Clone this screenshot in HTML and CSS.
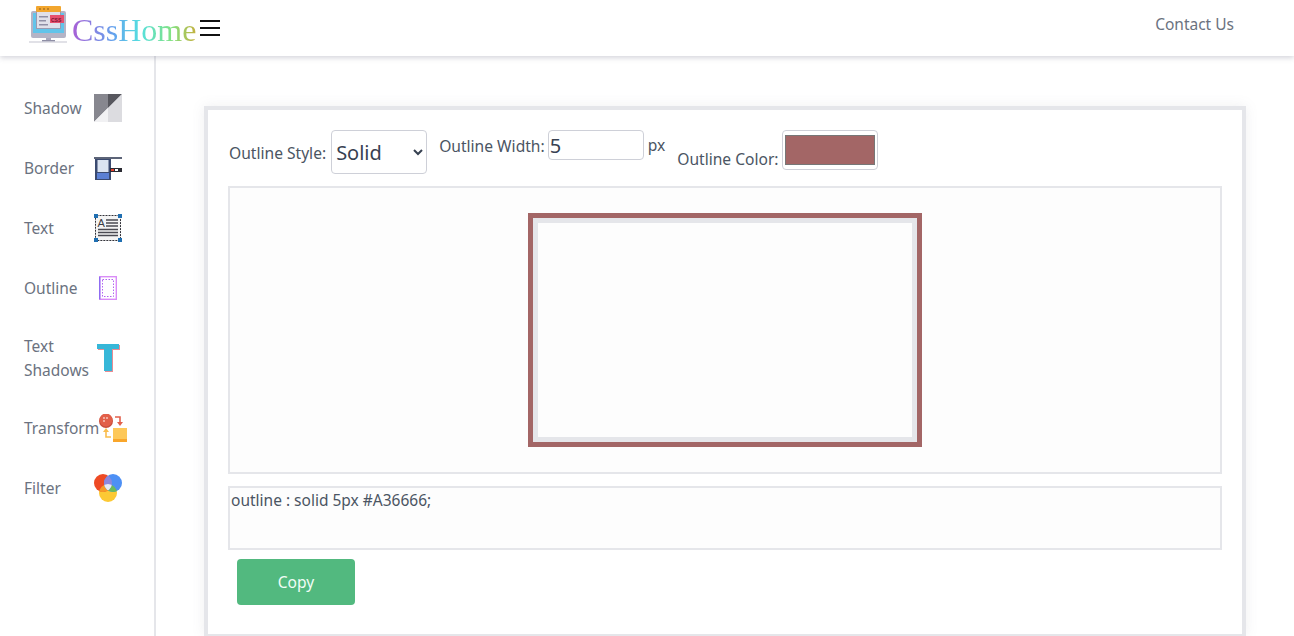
FILE: index.html
```html
<!DOCTYPE html>
<html lang="en">
<head>
	<meta charset="UTF-8">
	<meta name="viewport" content="width=device-width, initial-scale=1.0">
	<title>CssHome</title>

	<link rel="stylesheet" href="styles.css">
</head>
<body>

	<header class="navbar">
		<a class="brand" href="#">
			<svg class="logo" width="40" height="38" viewBox="0 0 40 38">
				<rect x="3" y="6" width="35" height="27" rx="2" fill="#b4b4c6"/>
				<rect x="5" y="8" width="31" height="20" fill="#62c4ea"/>
				<rect x="8.5" y="3.5" width="24" height="20" fill="#e0e0e9" stroke="#9a9ab0"/>
				<rect x="8" y="1" width="25" height="6" rx="1" fill="#f2a62e"/>
				<path d="M11 4h2M15 4h2M19 4h2" stroke="#8a5a1c"/>
				<rect x="11" y="11" width="9" height="1.5" fill="#8f8fa6"/>
				<rect x="11" y="15" width="7" height="1.5" fill="#8f8fa6"/>
				<rect x="11" y="19" width="9" height="1.5" fill="#8f8fa6"/>
				<rect x="22" y="10" width="14" height="8" fill="#e6506e"/>
				<text x="23" y="16.5" class="logo-css">CSS</text>
				<rect x="18" y="33" width="5" height="2" fill="#a9a9bd"/>
				<rect x="14" y="35" width="13" height="1.5" fill="#8f8fa6"/>
				<rect x="1" y="36.5" width="38" height="1" fill="#c4c4d0"/>
			</svg>
			<span class="brand-name">CssHome</span>
		</a>
		<button class="burger" aria-label="menu"><i></i><i></i><i></i></button>
		<a class="contact" href="#">Contact Us</a>
	</header>

	<div class="page">
		<aside class="sidebar">
			<a class="side-item" href="#">
				<span class="side-label">Shadow</span>
				<svg width="28" height="28" viewBox="0 0 28 28">
					<polygon points="0,0 28,0 0,28" fill="#87878f"/>
					<polygon points="14,0 28,0 14,14" fill="#57575e"/>
					<polygon points="28,0 28,28 0,28" fill="#dcdce0"/>
					<polygon points="14,14 14,28 0,28" fill="#f1f1f3"/>
				</svg>
			</a>
			<a class="side-item" href="#">
				<span class="side-label">Border</span>
				<svg width="28" height="28" viewBox="0 0 28 28">
					<rect x="1" y="4" width="16" height="22" fill="#3a4a70"/>
					<rect x="0" y="3" width="28" height="2" fill="#5c6478"/>
					<rect x="3.5" y="6" width="11" height="12" fill="#dbe4f1"/>
					<rect x="3" y="19" width="12" height="6" fill="#5b80d4"/>
					<rect x="16" y="14" width="12" height="4" fill="#2b2b33"/>
					<rect x="17" y="15" width="3" height="2" fill="#e2402c"/>
					<rect x="21" y="15" width="3" height="2" fill="#fff"/>
				</svg>
			</a>
			<a class="side-item" href="#">
				<span class="side-label">Text</span>
				<svg width="28" height="28" viewBox="0 0 28 28">
					<rect x="1.5" y="1.5" width="25" height="25" rx="1" fill="#f4f4f4" stroke="#33333a" stroke-dasharray="2 1"/>
					<text x="3.5" y="13" class="icon-a">A</text>
					<path d="M12 6h12M12 9h12M12 12h12M4 15.500h20M4 18.500h20M4 21.500h20" stroke="#4a4a52" stroke-width="1.4"/>
					<rect x="0" y="0" width="4" height="4" fill="#1f6fb2"/>
					<rect x="24" y="0" width="4" height="4" fill="#1f6fb2"/>
					<rect x="0" y="24" width="4" height="4" fill="#1f6fb2"/>
					<rect x="24" y="24" width="4" height="4" fill="#1f6fb2"/>
				</svg>
			</a>
			<a class="side-item" href="#">
				<span class="side-label">Outline</span>
				<svg width="28" height="28" viewBox="0 0 28 28">
					<rect x="5.7" y="2.7" width="16.6" height="22.6" fill="#fff" stroke="#d98cf7" stroke-width="1.4"/>
					<path d="M5.700 2.700v22.600" stroke="#8f6cf2" stroke-width="1.4"/>
					<rect x="8.5" y="5.5" width="11" height="17" fill="none" stroke="#b164f0" stroke-dasharray="1.5 1.5"/>
				</svg>
			</a>
			<a class="side-item" href="#">
				<span class="side-label">Text Shadows</span>
				<svg width="28" height="30" viewBox="0 0 28 30">
					<path d="M4 2h22v5h-7v22h-8v-22h-7z" fill="#e98b93"/>
					<path d="M3 1h22v5h-7v22h-8v-22h-7z" fill="#36b7d8"/>
				</svg>
			</a>
			<a class="side-item" href="#">
				<span class="side-label">Transform</span>
				<svg width="28" height="28" viewBox="0 0 28 28">
					<circle cx="7" cy="7" r="7" fill="#c94f3d"/>
					<circle cx="7" cy="6" r="6.400" fill="#e25f49"/>
					<circle cx="5" cy="4" r="1" fill="#f5c4ba"/>
					<circle cx="8" cy="4" r="1" fill="#f5c4ba"/>
					<circle cx="5" cy="7" r="1" fill="#f5c4ba"/>
					<path d="M16 3h5v6" fill="none" stroke="#e2604c" stroke-width="1.6"/>
					<path d="M18 8h6l-3 4z" fill="#e2604c"/>
					<rect x="14" y="14" width="14" height="14" fill="#fdc859"/>
					<rect x="14" y="25" width="14" height="3" fill="#f9a62b"/>
					<path d="M12 23h-5v-6" fill="none" stroke="#f9bd4e" stroke-width="1.6"/>
					<path d="M4 18h6l-3-4z" fill="#f9bd4e"/>
				</svg>
			</a>
			<a class="side-item" href="#">
				<span class="side-label">Filter</span>
				<svg width="28" height="28" viewBox="0 0 28 28">
					<defs>
						<clipPath id="clip-red"><circle cx="9" cy="9" r="9"/></clipPath>
						<clipPath id="clip-blue"><circle cx="19" cy="9" r="9"/></clipPath>
						<clipPath id="clip-yellow"><circle cx="14" cy="19" r="9"/></clipPath>
					</defs>
					<circle cx="14" cy="19" r="9" fill="#fcc934"/>
					<circle cx="9" cy="9" r="9" fill="#ee4a24"/>
					<circle cx="19" cy="9" r="9" fill="#4d90f5"/>
					<circle cx="9" cy="9" r="9" fill="#f59a28" clip-path="url(#clip-yellow)"/>
					<circle cx="19" cy="9" r="9" fill="#6cbb5c" clip-path="url(#clip-yellow)"/>
					<circle cx="9" cy="9" r="9" fill="#8d87dd" clip-path="url(#clip-blue)"/>
					<g clip-path="url(#clip-yellow)">
						<circle cx="9" cy="9" r="9" fill="#e6eaf4" clip-path="url(#clip-blue)"/>
					</g>
				</svg>
			</a>
		</aside>

		<main class="content">
			<section class="card">
				<div class="controls">
					<div class="control control-style">
						<label for="style">Outline Style:</label>
						<select id="style" class="style-select">
							<option>Solid</option>
							<option>Dashed</option>
							<option>Dotted</option>
						</select>
					</div>
					<div class="control control-width">
						<label for="width">Outline Width:</label>
						<input id="width" class="width-input" type="text" value="5">
						<span class="unit">px</span>
					</div>
					<div class="control control-color">
						<label for="color">Outline Color:</label>
						<input id="color" class="color-input" type="color" value="#a36666">
					</div>
				</div>

				<div class="preview">
					<div class="preview-box"></div>
				</div>

				<textarea class="code" readonly>outline : solid 5px #A36666;</textarea>

				<button class="copy">Copy</button>
			</section>
		</main>
	</div>

</body>
</html>
```

FILE: styles.css
```css
* {
	margin: 0;
	padding: 0;
	box-sizing: border-box;
}

html, body {
	height: 100%;
	overflow: hidden;
}

body {
	display: flex;
	flex-direction: column;
	font-family: "Noto Sans", sans-serif;
	font-size: 15.5px;
	line-height: 24px;
	color: #4b5563;
	background-color: #fff;
}

a {
	color: inherit;
	text-decoration: none;
}

.navbar {
	position: relative;
	z-index: 2;
	display: flex;
	align-items: center;
	flex: none;
	height: 56px;
	padding: 0 60px 0 28px;
	background-color: #fff;
	box-shadow: 0 2px 5px rgba(120, 120, 140, .3);
}

.brand {
	display: flex;
	align-items: center;
}

.logo {
	margin: -8px 4px 0 0;
}

.logo-css {
	font-family: "Liberation Sans", sans-serif;
	font-size: 5px;
	font-weight: bold;
	fill: #7a1230;
}

.icon-a {
	font-family: "Liberation Sans", sans-serif;
	font-size: 11px;
	fill: #3c3c44;
}

.brand-name {
	font-family: "Liberation Serif", serif;
	font-size: 32px;
	line-height: 40px;
	margin-top: 4px;
	background: linear-gradient(90deg, #a95fd6, #62a6ee 35%, #55e0df 55%, #82e283 80%, #c4b13f);
	-webkit-background-clip: text;
	background-clip: text;
	color: transparent;
}

.burger {
	display: flex;
	flex-direction: column;
	gap: 5px;
	width: 20px;
	margin-left: 4px;
	border: 0;
	background: none;
}

.burger i {
	display: block;
	height: 2px;
	background-color: #111;
}

.contact {
	margin-left: auto;
	margin-top: -8px;
	color: #6b7280;
}

.page {
	display: flex;
	flex: 1;
	min-height: 0;
}

.sidebar {
	flex: none;
	width: 156px;
	padding: 22px 0 0 24px;
	border-right: 2px solid #e5e6ea;
}

.side-item {
	display: flex;
	align-items: center;
	padding: 16px 0;
	color: #6b7280;
}

.side-label {
	min-width: 70px;
	width: min-content;
}

.side-item svg {
	flex: none;
}

.content {
	flex: 1;
	padding: 50px 48px 0 48px;
}

.card {
	height: 530px;
	padding: 20px 20px 0 20px;
	border: 4px solid #e5e6ea;
	border-bottom-width: 2px;
	box-shadow: 0 0 12px rgba(120, 120, 140, .12);
}

.controls {
	display: flex;
	height: 44px;
	font-size: 15.6px;
}

.control {
	display: flex;
	gap: 3px;
}

.control label {
	padding-top: 2px;
}

.control-style {
	align-items: center;
	margin: 0 12px 0 1px;
	gap: 5px;
}

.control-width {
	align-items: center;
	height: 30px;
	margin-right: 12px;
}

.control-color {
	align-items: flex-end;
	height: 40px;
}

.control-color label {
	margin-bottom: -1px;
}

.unit {
	margin-left: 1px;
}

.style-select,
.width-input,
.color-input {
	border: 1px solid #ced0d8;
	border-radius: 4px;
	background-color: #fff;
	color: #374151;
	font-family: inherit;
}

.style-select {
	width: 96px;
	height: 44px;
	font-size: 20px;
}

.width-input {
	width: 96px;
	height: 30px;
	padding: 0 1px;
	font-size: 20px;
}

.color-input {
	width: 96px;
	height: 40px;
	padding: 4px 2px;
}

.color-input::-webkit-color-swatch-wrapper {
	padding: 0;
}

.preview {
	display: flex;
	align-items: center;
	justify-content: center;
	height: 288px;
	margin-top: 12px;
	border: 2px solid #e5e6ea;
	background-color: #fdfdfd;
}

.preview-box {
	width: 384px;
	height: 224px;
	border: 5px solid #e5e6ea;
	outline: 5px solid #a36666;
}

.code {
	display: block;
	width: 100%;
	height: 64px;
	margin-top: 12px;
	padding: 0 1px;
	border: 2px solid #e5e6ea;
	background-color: #fdfdfd;
	color: #4b5563;
	font-family: inherit;
	font-size: 15.5px;
	line-height: 24px;
	resize: none;
}

.copy {
	display: block;
	width: 118px;
	height: 46px;
	margin: 9px 0 0 9px;
	border: 0;
	border-radius: 4px;
	background-color: #52b97f;
	color: #f0fdf6;
	font-family: inherit;
	font-size: 15.6px;
}
```
